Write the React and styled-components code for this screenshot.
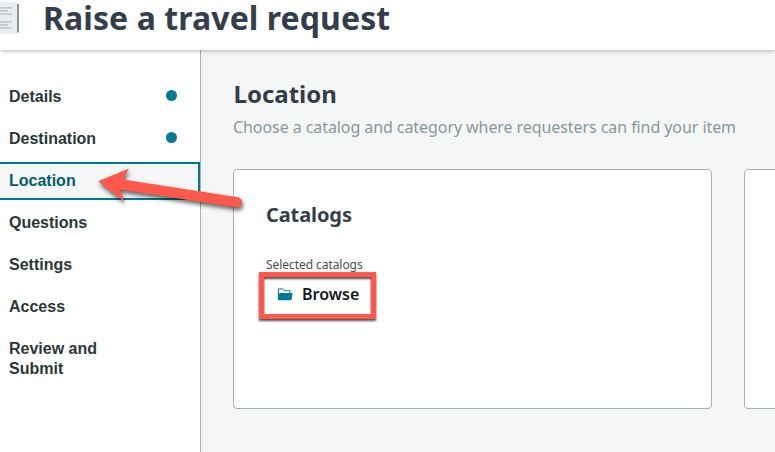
import React from "react";
import styled, { createGlobalStyle } from "styled-components";

const Global = createGlobalStyle`
  * { box-sizing: border-box; }
  body { margin: 0; overflow: hidden; background: #fff; }
  h1, h2, h3, p { margin: 0; }
`;

const Page = styled.div`
  position: relative;
  display: flex;
  flex-direction: column;
  width: 775px;
  height: 452px;
  overflow: hidden;
  font-family: "Noto Sans", sans-serif;
  color: #343d4b;
`;

const Header = styled.header`
  flex: none;
  display: flex;
  align-items: flex-start;
  height: 50px;
  background: #fff;
  box-shadow: 0 1px 4px rgba(0, 0, 0, 0.27);
  z-index: 1;
`;

const DocumentIcon = styled.svg`
  flex: none;
  width: 20px;
  height: 36px;
  margin-right: 23px;
`;

const Title = styled.h1`
  font-size: 32px;
  line-height: 36px;
  font-weight: 700;
  letter-spacing: 0.08px;
  white-space: nowrap;
`;

const Body = styled.div`
  flex: 1;
  display: flex;
  min-height: 0;
`;

const Sidebar = styled.nav`
  flex: none;
  display: flex;
  flex-direction: column;
  gap: 4px;
  width: 201px;
  padding-top: 28px;
  background: #fff;
  border-right: 1px solid #a5b1af;
`;

const Step = styled.button`
  display: flex;
  align-items: flex-start;
  justify-content: space-between;
  padding: 7px 21px 7px 9px;
  border: 2px solid ${(p) => (p.$active ? "#00798f" : "transparent")};
  border-left: 0;
  background: ${(p) => (p.$active ? "#f5f7f7" : "transparent")};
  color: ${(p) => (p.$active ? "#005d6e" : "#2b3737")};
  font: 700 16px/20px "Liberation Sans", Arial, sans-serif;
  text-align: left;
`;

const StepLabel = styled.span`
  max-width: 100px;
`;

const Dot = styled.i`
  width: 11px;
  height: 11px;
  margin-top: 3px;
  border-radius: 50%;
  background: #007b93;
`;

const Main = styled.main`
  flex: 1;
  min-width: 0;
  padding: 27px 0 0 32px;
  background: #f5f7f7;
`;

const Heading = styled.h2`
  padding-left: 0.5px;
  font-size: 24px;
  line-height: 34px;
  font-weight: 700;
`;

const Subtitle = styled.p`
  margin-top: 5px;
  font-size: 16px;
  line-height: 22px;
  letter-spacing: -0.075px;
  color: #89979a;
  white-space: nowrap;
`;

const Cards = styled.div`
  display: flex;
  gap: 32px;
  margin-top: 31px;
`;

const Card = styled.section`
  flex: none;
  width: 479px;
  height: 240px;
  padding: 31px 32px;
  background: #fff;
  border: 1px solid #a6b1b1;
  border-radius: 4px;
`;

const CardTitle = styled.h3`
  font-size: 20px;
  line-height: 28px;
  font-weight: 700;
  letter-spacing: -0.1px;
`;

const FieldLabel = styled.div`
  margin-top: 28px;
  font-size: 12px;
  line-height: 16px;
  letter-spacing: -0.06px;
  color: #455150;
`;

const BrowseButton = styled.button`
  display: flex;
  align-items: center;
  gap: 9px;
  height: 42px;
  margin: 0;
  padding: 0 16px 0 11px;
  border: 0;
  background: none;
  color: #151920;
  font: 600 16px/22px "Noto Sans", sans-serif;
`;

const FolderIcon = styled.svg`
  width: 16px;
  height: 14px;
`;

const Highlight = styled.div`
  position: absolute;
  left: 259px;
  top: 272px;
  width: 117px;
  height: 47px;
  border: 5px solid #ff594b;
  filter: drop-shadow(0 2px 1px rgba(0, 0, 0, 0.7));
`;

const Arrow = styled.svg`
  position: absolute;
  left: 90px;
  top: 160px;
  z-index: 2;
  filter: drop-shadow(1px 3px 2px rgba(0, 0, 0, 0.6));
`;

const steps = [
  { label: "Details", dot: true },
  { label: "Destination", dot: true },
  { label: "Location", active: true },
  { label: "Questions" },
  { label: "Settings" },
  { label: "Access" },
  { label: "Review and Submit" },
];

export default function App() {
  return (
    <Page>
      <Global />
      <Header>
        <DocumentIcon viewBox="0 0 20 36">
          <path d="M16 4h3v28.5h-3z" fill="#83939e" />
          <path d="M0 2h16l1 1v31H0z" fill="#e9eff1" />
          <path
            d="M0 7.8h12M0 10.8h8M0 14h12M0 21.8h12M0 24.8h8M0 28h12"
            stroke="#c3c8c9"
            strokeWidth="1.7"
          />
        </DocumentIcon>
        <Title>Raise a travel request</Title>
      </Header>
      <Body>
        <Sidebar>
          {steps.map((s) => (
            <Step key={s.label} $active={s.active}>
              <StepLabel>{s.label}</StepLabel>
              {s.dot && <Dot />}
            </Step>
          ))}
        </Sidebar>
        <Main>
          <Heading>Location</Heading>
          <Subtitle>
            Choose a catalog and category where requesters can find your item
          </Subtitle>
          <Cards>
            <Card>
              <CardTitle>Catalogs</CardTitle>
              <FieldLabel>Selected catalogs</FieldLabel>
              <BrowseButton>
                <FolderIcon viewBox="0 0 16 14">
                  <path
                    d="M1.4 12V1.9h4.3l1.6 1.8h5.6v2.3"
                    fill="none"
                    stroke="#007b93"
                  />
                  <path
                    d="M1 12V8.2C1.6 6.6 2.6 6 4 6h11.6L14.6 12.4q-.2.8-1 .8H2q-1 0-1-1.2z"
                    fill="#007b93"
                  />
                </FolderIcon>
                Browse
              </BrowseButton>
            </Card>
            <Card />
          </Cards>
        </Main>
      </Body>
      <Highlight />
      <Arrow width="165" height="60" viewBox="90 160 165 60">
        <path
          d="M98 181.2 129 168.5 123 179.5 238 197.2A5 5 0 0 1 236 207.2L120 189.5 124 201.5Z"
          fill="#ff594b"
        />
      </Arrow>
    </Page>
  );
}
